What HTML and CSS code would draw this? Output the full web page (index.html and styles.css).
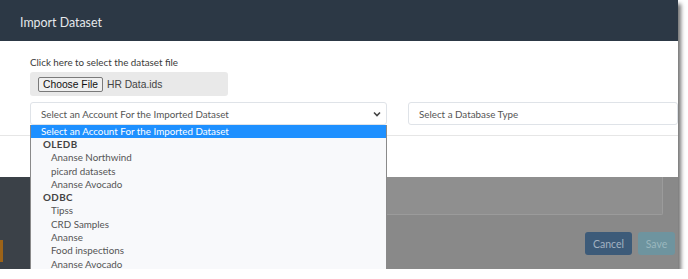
FILE: index.html
```html
<!DOCTYPE html>
<html>
<head>
<meta charset="utf-8">
<link rel="stylesheet" href="styles.css">
</head>
<body>
<div class="shot">
  <div class="modal">
    <div class="modal-header"><h1 class="modal-title">Import Dataset</h1></div>
    <div class="modal-body">
      <div class="field-label">Click here to select the dataset file</div>
      <div class="file-box"><span class="file-btn">Choose File</span><span class="file-name">HR Data.ids</span></div>
      <div class="selects">
        <div class="select-wrap">
          <div class="select">
            <span>Select an Account For the Imported Dataset</span>
            <svg class="chev" width="8" height="6" viewBox="0 0 8 6"><path d="M1 1.5 L4 4.5 L7 1.5" fill="none" stroke="#444" stroke-width="1.6"/></svg>
          </div>
          <div class="dropdown">
            <div class="opt selected">Select an Account For the Imported Dataset</div>
            <div class="group">OLEDB</div>
            <div class="opt sub">Ananse Northwind</div>
            <div class="opt sub">picard datasets</div>
            <div class="opt sub">Ananse Avocado</div>
            <div class="group">ODBC</div>
            <div class="opt sub">Tipss</div>
            <div class="opt sub">CRD Samples</div>
            <div class="opt sub">Ananse</div>
            <div class="opt sub">Food inspections</div>
            <div class="opt sub">Ananse Avocado</div>
          </div>
        </div>
        <div class="select second"><span>Select a Database Type</span></div>
      </div>
    </div>
    <div class="modal-footer"></div>
  </div>
  <div class="page">
    <div class="sidebar"><div class="accent"></div></div>
    <div class="page-main">
      <div class="textarea"></div>
      <div class="actions">
        <span class="btn cancel">Cancel</span>
        <span class="btn save">Save</span>
      </div>
    </div>
  </div>
</div>
</body>
</html>
```

FILE: styles.css
```css
* { box-sizing: border-box; }
html, body { margin: 0; padding: 0; background: #ffffff; }
body { font-family: Lato, "Open Sans", "Liberation Sans", sans-serif; }

.shot {
  width: 678px;
  height: 269px;
  overflow: hidden;
  box-shadow: 3px 4px 4px rgba(0,0,0,0.55);
  display: flex;
  flex-direction: column;
  background: #8b8b8b;
}

.modal { position: relative; z-index: 2; background: #fff; flex: none; }

.modal-header {
  height: 41px;
  background: #2c3845;
  display: flex;
  align-items: center;
  padding-left: 20px;
}
.modal-title {
  margin: 0;
  font-size: 12.4px;
  font-weight: 400;
  color: #e6e9ec;
  padding-top: 3px;
}

.modal-body {
  padding: 14px 0 10px 30px;
  display: flex;
  flex-direction: column;
}
.field-label {
  font-size: 9.8px;
  line-height: 14px;
  color: #3a3a3a;
  margin-bottom: 3px;
}
.file-box {
  width: 198px;
  height: 24px;
  background: #e9e9e9;
  border-radius: 3px;
  display: flex;
  align-items: center;
  padding-left: 8px;
  font-family: "Liberation Sans", Arial, sans-serif;
  font-size: 10.3px;
  color: #333;
}
.file-btn {
  height: 15px;
  padding: 0 4px;
  border: 1px solid #7a7a7a;
  border-radius: 2px;
  background: #efefef;
  color: #111;
  display: flex;
  align-items: center;
  margin-right: 4px;
}
.file-name { color: #444; }

.selects {
  display: flex;
  gap: 21px;
  margin-top: 6px;
}
.select-wrap { position: relative; }
.select {
  width: 357px;
  height: 23px;
  border: 1px solid #dfe3e8;
  border-radius: 3px;
  display: flex;
  align-items: center;
  justify-content: space-between;
  padding: 0 5px 0 10px;
  font-size: 9.8px;
  color: #555;
  background: #fff;
}
.select.second { width: 300px; }

.dropdown {
  position: absolute;
  left: 0;
  top: 23px;
  width: 357px;
  background: #f8f9fb;
  border-left: 1px solid #8a8a8a;
  border-right: 1px solid #8a8a8a;
  font-size: 9.8px;
  color: #555;
  z-index: 5;
}
.opt, .group { height: 13.3px; line-height: 13.3px; white-space: nowrap; }
.opt.selected { background: #1e90ff; color: #fff; padding-left: 10px; height: 13px; }
.group { font-weight: 700; color: #444; padding-left: 12px; letter-spacing: 0.4px; }
.opt.sub { padding-left: 20px; }

.modal-footer {
  height: 42px;
  border-top: 1px solid #e6e6e6;
}

.page {
  flex: 1;
  display: flex;
  position: relative;
  z-index: 1;
}
.sidebar {
  width: 30px;
  background: #3b4148;
  padding-top: 63px;
}
.accent { width: 3px; height: 22px; background: #9c6318; }
.page-main {
  flex: 1;
  background: #898989;
  display: flex;
  flex-direction: column;
  align-items: flex-end;
}
.textarea {
  height: 38px;
  width: calc(100% - 15px);
  align-self: flex-start;
  background: #8f8f8f;
  border-right: 1px solid #9b9b9b;
  border-bottom: 1px solid #9b9b9b;
  border-bottom-right-radius: 2px;
}
.actions {
  display: flex;
  gap: 6px;
  margin-top: 17px;
  margin-right: 3px;
}
.btn {
  height: 23px;
  display: flex;
  align-items: center;
  justify-content: center;
  font-size: 10.5px;
  border-radius: 3px;
}
.btn.cancel { width: 47px; background: #3d5b79; color: #a3b2c2; }
.btn.save { width: 37px; background: #6e949f; color: #9ab7be; }
```
